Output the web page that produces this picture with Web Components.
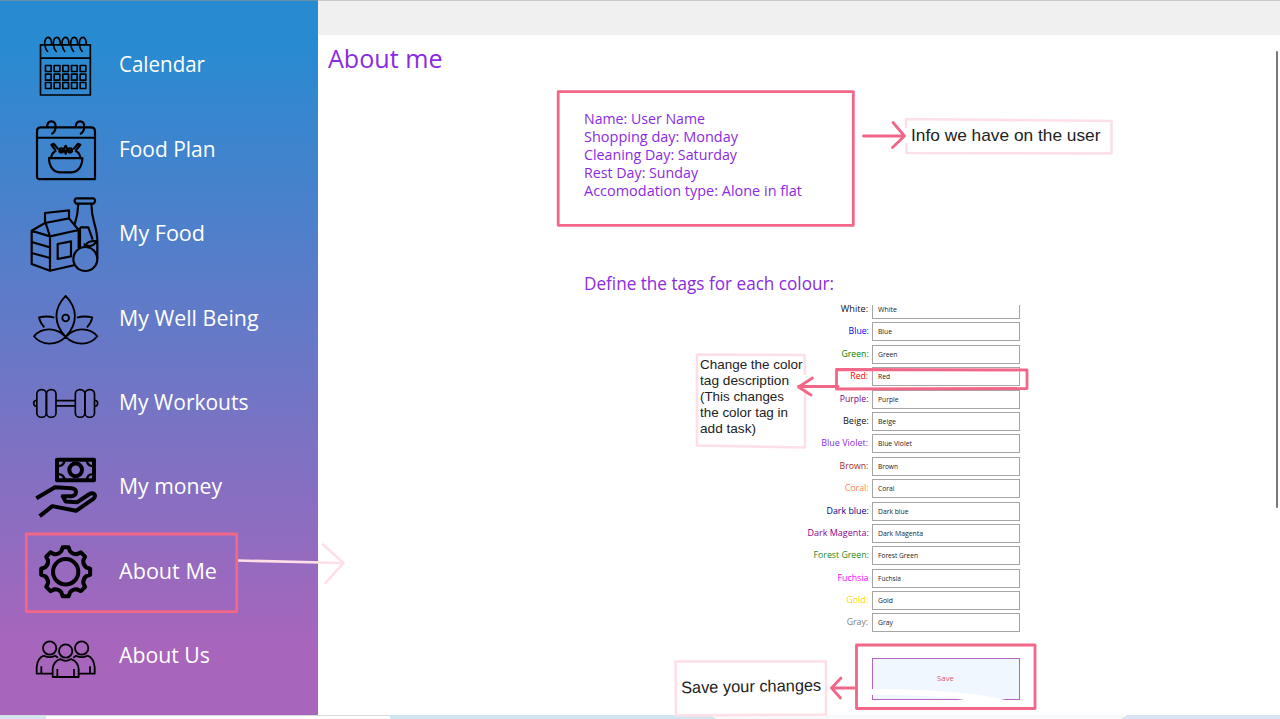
<!DOCTYPE html>
<html lang="en">
<head>
<meta charset="utf-8">
<title>About me</title>
<style>
html,body{margin:0;height:100%;overflow:hidden;background:#fff}
body{font-family:"Open Sans","Noto Sans",sans-serif}
</style>
</head>
<body>
<planner-app></planner-app>
<script>
/* Text squeezed or stretched to a given width */
class FitText extends HTMLElement{
  connectedCallback(){
    const root=this.attachShadow({mode:'open'});
    root.innerHTML='<style>:host{display:inline-block;white-space:nowrap}span{display:inline-block;transform-origin:left center}:host([end]) span{transform-origin:right center}</style><span><slot></slot></span>';
    const s=root.querySelector('span'),w=+this.getAttribute('w'),n=s.getBoundingClientRect().width;
    if(w&&n)s.style.transform='scaleX('+(w/n).toFixed(4)+')';
  }
}
customElements.define('fit-text',FitText);

const gear=()=>{
  const p=(a,r)=>{const t=a*Math.PI/180;return (197+r*Math.cos(t)).toFixed(1)+' '+(140+r*Math.sin(t)).toFixed(1)};
  let d='';
  for(let k=0;k<8;k++){const a=k*45;d+=(k?'L':'M')+p(a-7,74)+'L'+p(a+7,74)+'L'+p(a+12,63)+'Q'+p(a+22.5,56)+' '+p(a+33,63)}
  return d+'Z';
};
const ring=x=>`<path d="M${x+11} 132C${x+11} 104 ${x-10} 104 ${x-10} 129C${x-9} 142 ${x-6} 149 ${x} 154"/>`;
const icons={
 calendar:[0,5,`<path d="M121.500 133H271V283.500H121.500ZM121.500 173H271"/>${[144,170,196,222,248].map(ring).join('')}${[195,221,246].map(y=>[136.500,162.500,188.500,214.500,240.500].map(x=>`<rect x="${x}" y="${y}" width="17" height="18"/>`).join('')).join('')}`],
 plan:[0,6.5,`<path d="M285 537H119Q111 537 111 529V394Q111 382 123 382H273Q285 382 285 394ZM111 413H285M141 381C142 358 166 358 167 380Q166 397 154 402M227 381C228 358 252 358 253 380Q252 397 240 402"/><path d="M147 474H247C247 500 233 517 212 517H182C161 517 147 500 147 474ZM153 471Q157 456 169 451M225 451Q238 456 241 471M166 450L154 434L161 431L175 448M228 450L241 434L234 431L220 448M178 452H218"/><circle cx="184" cy="451" r="6"/><circle cx="210" cy="451" r="6"/><path d="M197 437L202 446L197 461L192 446Z"/>`],
 food:[185,6.5,`<path d="M95 138L135 115V85L207 77V101L236 136V190M135 115L207 101M137 115L150 155L236 136M95 138L150 155V258L95 238ZM150 258L225 241M95 172L150 188M95 205L150 220M173 178L213 170V215L173 223ZM228 57L224 51Q223 41 231 41H278Q286 41 285 51L281 57ZM235 57Q234 88 224 120M274 57Q275 90 283 116Q293 150 292 175V222M240 128H265L278 165M240 128V190M256 187Q257 181 251 178M258 184Q258 168 289 169Q283 186 258 184"/><circle cx="256" cy="223" r="36"/>`],
 lotus:[185,5.500,`<path d="M197 332C160 370 160 415 197 455C234 415 234 370 197 332ZM197 455C170 425 125 425 102 453C125 482 170 482 197 455C224 425 269 425 292 453C269 482 224 482 197 455M163 397Q143 391 117 396Q120 412 133 426M231 397Q251 391 277 396Q274 412 261 426"/><circle cx="197" cy="398" r="10"/>`],
 dumbbell:[350,5,`${[110.500,139.500,226,255].map(x=>`<rect x="${x}" y="119" width="28.500" height="83" rx="13"/>`).join('')}<path d="M168 152H226M168 168H226M109 151Q101 152 101 160Q101 168 109 169M285 151Q293 152 293 160Q293 168 285 169"/>`],
 money:[350,12,`<rect x="171" y="331" width="111" height="61"/><circle cx="227" cy="361" r="19"/><path stroke-width="7" d="M175 350Q190 350 194 334M278 350Q264 350 260 334M175 374Q190 374 194 390M278 374Q264 374 260 390"/><path d="M109 446L165 413L215 416C234 418 231 440 214 440H188L197 456L232 458L266 435C284 425 290 440 280 448L228 484L157 470L119 500"/>`],
 gear:[525,12,`<path d="${gear()}"/><circle cx="197" cy="140" r="38"/>`],
 people:[525,5.500,`<circle cx="149" cy="370" r="20"/><circle cx="245" cy="370" r="20"/><circle cx="197" cy="379" r="20"/><path d="M158 457V432Q160 410 181 403Q197 414 213 403Q234 410 236 432V457ZM172 433V457M222 433V457M158 447H110V427Q113 399 132 393Q149 402 166 393L174 399M236 447H284V427Q281 399 262 393Q245 402 228 393L220 399M124 425V447M270 425V447"/>`]
};
class NavItem extends HTMLElement{
  connectedCallback(){
    const [o,w,b]=icons[this.getAttribute('icon')],i=+this.getAttribute('index'),top=22.5+84.4*i;
    this.attachShadow({mode:'open'}).innerHTML=`<style>:host{display:flex;height:84.4px;align-items:center;color:#fff;font-size:22px;line-height:30px}svg{display:block;flex:none;width:119px;height:84.4px;overflow:visible}fit-text{margin-bottom:2.6px}</style>
    <svg viewBox="0 ${top} 119 84.4"><g transform="translate(0 ${o}) scale(.33333)" fill="none" stroke="#000" stroke-width="${w}" stroke-linejoin="round">${b}</g></svg><fit-text w="${this.getAttribute('w')}">${this.textContent}</fit-text>`;
  }
}
customElements.define('nav-item',NavItem);

class SideNav extends HTMLElement{
  connectedCallback(){
    const it=[['calendar','Calendar',86],['plan','Food Plan',96.5],['food','My Food',86],['lotus','My Well Being',139.5],['dumbbell','My Workouts',129.5],['money','My money',103],['gear','About Me',98],['people','About Us',91]];
    this.attachShadow({mode:'open'}).innerHTML=`<style>:host{display:block;box-sizing:border-box;padding-top:21.5px;background:linear-gradient(#288bd1 6%,#a865bc 91%);border-top:1px solid #6590aa}</style>${it.map((a,i)=>`<nav-item icon="${a[0]}" index="${i}" w="${a[2]}">${a[1]}</nav-item>`).join('')}`;
  }
}
customElements.define('side-nav',SideNav);

class TagRow extends HTMLElement{
  connectedCallback(){
    const g=n=>this.getAttribute(n);
    this.attachShadow({mode:'open'}).innerHTML=`<style>:host{display:grid;grid-template-columns:284.5px 148px;column-gap:3.5px;height:22.4px}
    .l{text-align:right;font-size:9.8px;line-height:18px;color:${g('color')}}
    .f{box-sizing:border-box;height:19px;border:1px solid #a5a5a5;padding-left:5.4px;font-size:6.8px;line-height:17.5px;color:#222;background:#fff}
    :host(:first-child) .f{clip-path:inset(5px 0 0 0)}</style>
    <div class="l"><fit-text end w="${g('lw')}">${g('label')}</fit-text></div><div class="f"><fit-text w="${g('vw')}">${g('value')}</fit-text></div>`;
  }
}
customElements.define('tag-row',TagRow);

class TagForm extends HTMLElement{
  connectedCallback(){
    const r=[['White:','#111',841.5,897],['Blue:','#00f',848.5,892],['Green:','#008000',841.5,897.5],['Red:','#f00',851,890],['Purple:','#800080',840,898.5],['Beige:','#111',843,896],['Blue Violet:','#8a2be2',822,912],['Brown:','#a52a2a',840,898],['Coral:','#ff7f50',845,894.5],['Dark blue:','#00008b',826.5,908.5],['Dark Magenta:','#8b008b',807.5,923],['Forest Green:','#228b22',813.5,918],['Fuchsia','#f0f',838,901],['Gold:','#ffd700',847,893],['Gray:','#808080',847.5,893]];
    this.attachShadow({mode:'open'}).innerHTML=`<style>:host{display:block;height:414px}
    .rows{display:flow-root;height:330px}.rows tag-row:first-child{margin-top:-5px}
    button{position:relative;display:block;box-sizing:border-box;margin:23px 0 0 288px;width:148px;height:42px;padding:0 0 2px;border:1px solid #b266bd;background:#f0f7ff;color:#dc5d68;font:7.8px/38px "Open Sans",sans-serif;text-align:center}
    button fit-text{margin-right:2px}
    svg{position:absolute;left:-1px;top:-1px;width:148px;height:42px}</style>
    <div class="rows">${r.map(a=>`<tag-row label="${a[0]}" value="${a[0].replace(':','')}" color="${a[1]}" lw="${868.8-a[2]}" vw="${a[3]-878}"></tag-row>`).join('')}</div>
    <button><fit-text w="17">Save</fit-text><svg viewBox="0 0 148 42"><path d="M-1 31C45 31 105 34 133 42H92C65 37 28 37 -1 37Z" fill="#fff"/></svg></button>`;
  }
}
customElements.define('tag-form',TagForm);

class AboutPage extends HTMLElement{
  connectedCallback(){
    this.attachShadow({mode:'open'}).innerHTML=`<style>:host{display:flex;flex-direction:column;color:#8a2be2}
    .bar{box-sizing:border-box;height:35px;flex:none;background:#f0f0f0;border-top:1px solid #c9c9c9}
    .body{flex:1;display:grid;grid-template-columns:1fr 2px;padding-right:2px}
    .scroll{margin-top:16px;height:457px;background:#777;border-radius:1px}
    h1{margin:5px 0 0 10px;font-weight:400;font-size:26.3px;line-height:36px;height:69px}
    .info{margin-left:266.4px;font-size:15px;line-height:18px;height:163px}
    .info div{height:18px}
    h2{margin:0 0 0 266.4px;font-weight:400;font-size:17.4px;line-height:22px;height:33px}</style>
    <div class="bar"></div><div class="body"><main>
    <h1><fit-text w="114.5">About me</fit-text></h1>
    <section class="info"><div><fit-text w="121">Name: User Name</fit-text></div><div><fit-text w="154">Shopping day: Monday</fit-text></div><div><fit-text w="153">Cleaning Day: Saturday</fit-text></div><div><fit-text w="114">Rest Day: Sunday</fit-text></div><div><fit-text w="218">Accomodation type: Alone in flat</fit-text></div></section>
    <h2><fit-text w="250">Define the tags for each colour:</fit-text></h2>
    <tag-form style="margin-left:266px"></tag-form></main><div class="scroll"></div></div>`;
  }
}
customElements.define('about-page',AboutPage);

/* Hand-drawn notes lying over the page */
class NoteLayer extends HTMLElement{
  connectedCallback(){
    this.attachShadow({mode:'open'}).innerHTML=`<style>:host{display:block;position:absolute;inset:0;pointer-events:none;font-family:"Liberation Sans",sans-serif;color:#222}
    svg{position:absolute;inset:0}.n{position:absolute}.n div{height:15.9px}</style>
    <svg width="1280" height="719" fill="none" stroke-width="2.800" stroke-linejoin="round" stroke-linecap="round">
    <g stroke="#fddfe8" stroke-width="2.600"><path d="M906 127V119L1111.500 121V153.500L906.500 153V144"/><path d="M805 374L804.500 355L697 354.500V445.500L805 447.500V388"/><path d="M675.500 661.500L826 661.500V714.500L676 715.500Z"/><path d="M238 560.500L342 563M323 544.500L343.500 563L325.500 583"/></g>
    <g stroke="#f26687"><path d="M558.200 91.700H853.300V225.300H558.200Z"/><path d="M863.500 136H904M893 122.500L904.500 136L892.500 147.500"/><path d="M836.500 369.500L1027 370V388.500L836.500 389Z"/><path d="M838 386.500H798.500M812.500 378L798.500 387L811 395"/><path d="M856.500 645H1035V708.500H856.500Z"/><path d="M856 688L831.500 688M841 678L831.500 688L840.500 698"/><path d="M26.300 534H236.700V611.700H26.300Z"/></g></svg>
    <div class="n" style="left:911px;top:125px;font-size:17px;line-height:22px"><fit-text w="189.500">Info we have on the user</fit-text></div>
    <div class="n" style="left:700px;top:357px;font-size:13.4px;line-height:16px"><div><fit-text w="102.500">Change the color</fit-text></div><div><fit-text w="89">tag description</fit-text></div><div><fit-text w="84">(This changes</fit-text></div><div><fit-text w="88">the color tag in</fit-text></div><div><fit-text w="56">add task)</fit-text></div></div>
    <div class="n" style="left:680.500px;top:675.500px;font-size:16.600px;line-height:22px"><div style="transform:rotate(-1deg)"><fit-text w="140.500">Save your changes</fit-text></div></div>`;
  }
}
customElements.define('note-layer',NoteLayer);

class TaskStrip extends HTMLElement{
  connectedCallback(){
    this.attachShadow({mode:'open'}).innerHTML=`<style>:host{display:block;height:4px;overflow:hidden}svg{display:block}</style><svg width="1280" height="4"><path fill="#f8f9fa" d="M0 0H1280V4H0Z"/><path fill="#d1e6f1" d="M0 0H46V4H0ZM390 0H708Q713 1 716 4H390Z"/><path fill="#fff" d="M46 0H390V4H46Z"/><path fill="#d9e3f3" d="M1127 0H1280V4H1121Z"/><path fill="#d9dadd" d="M0 0H390V1H0Z"/></svg>`;
  }
}
customElements.define('task-strip',TaskStrip);

class PlannerApp extends HTMLElement{
  connectedCallback(){
    this.attachShadow({mode:'open'}).innerHTML=`<style>:host{display:grid;position:relative;width:1280px;height:719px;grid-template:715px 4px/318px 962px;overflow:hidden}task-strip{grid-column:1/3}side-nav,about-page{min-height:0;overflow:hidden}</style><side-nav></side-nav><about-page></about-page><task-strip></task-strip><note-layer></note-layer>`;
  }
}
customElements.define('planner-app',PlannerApp);
</script>
</body>
</html>
